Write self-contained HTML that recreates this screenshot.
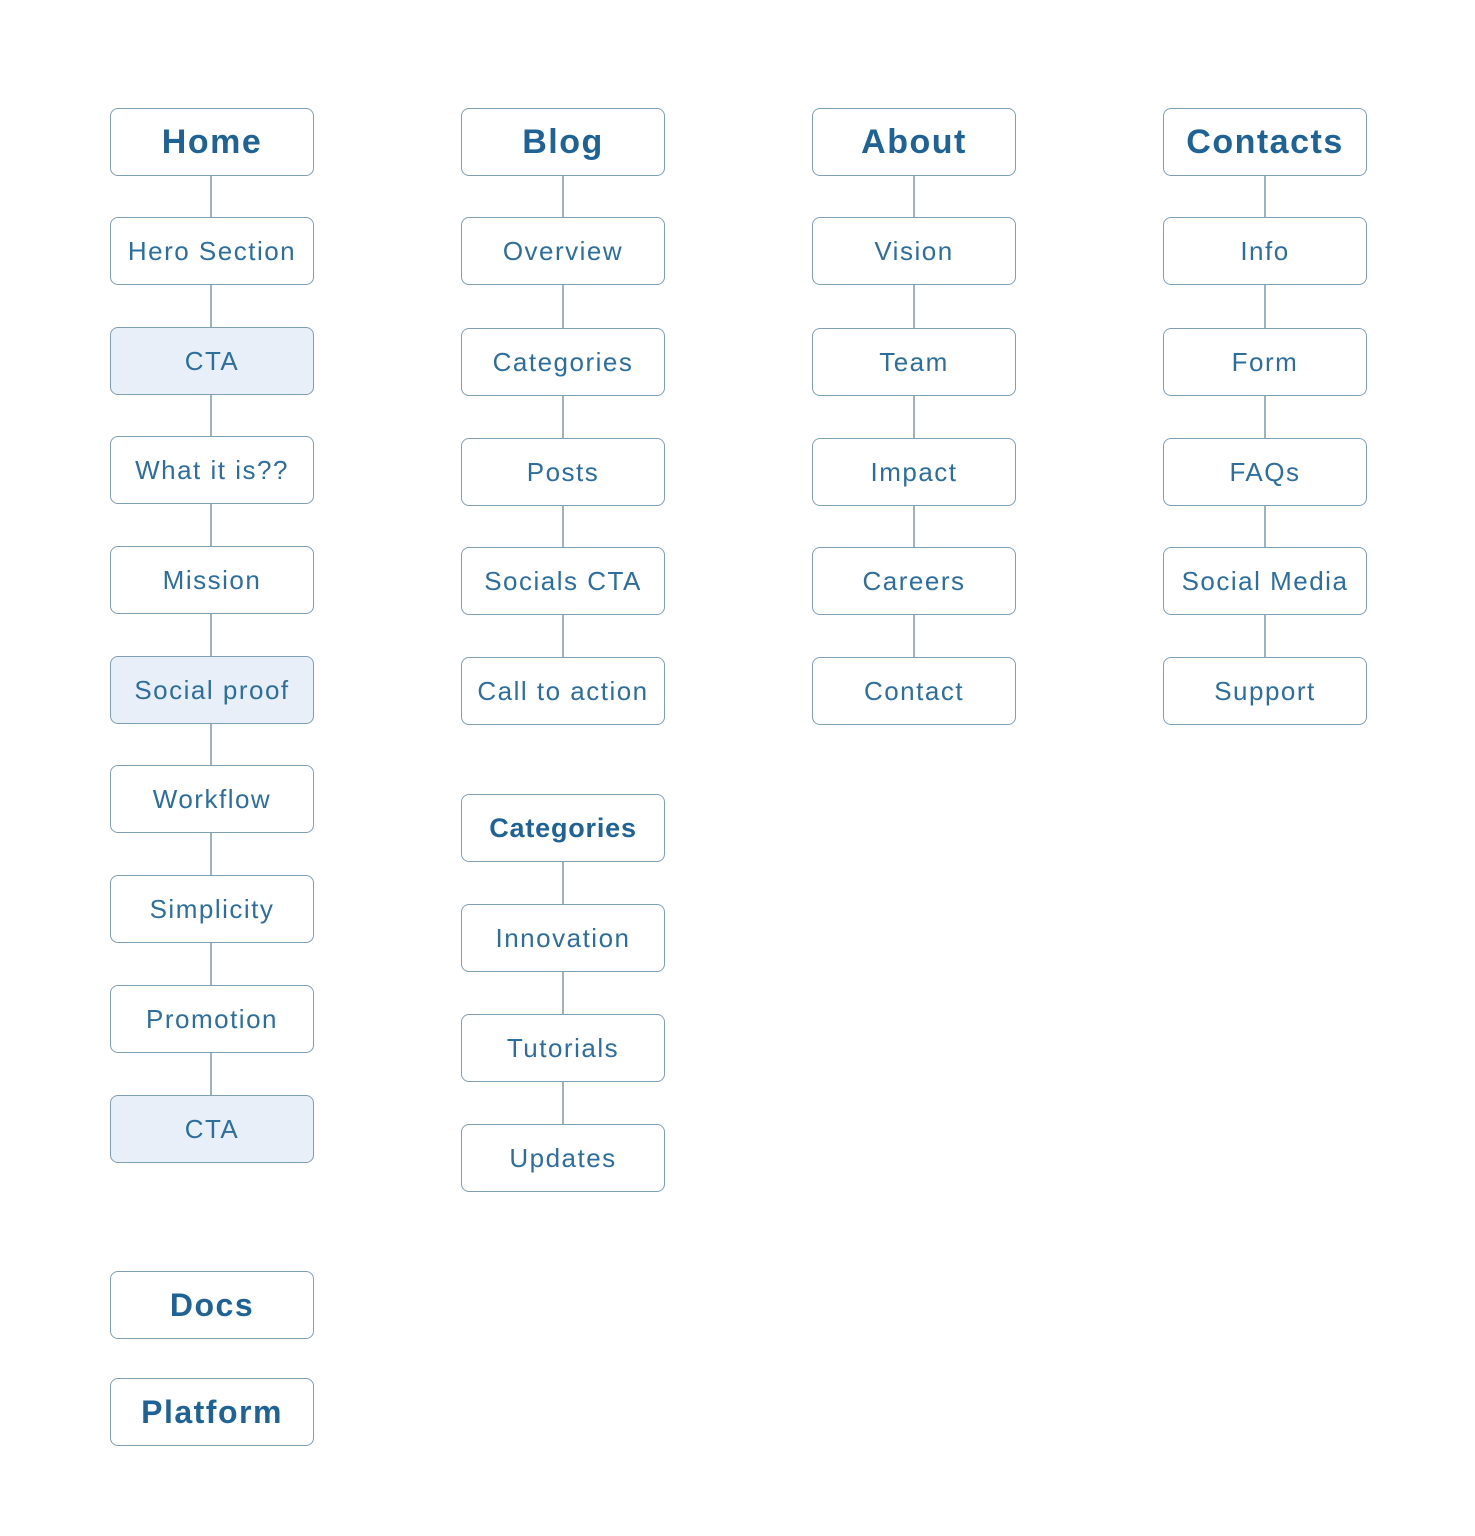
<!DOCTYPE html>
<html><head><meta charset="utf-8">
<style>
html,body{margin:0;padding:0;background:#fff;}
body{width:1475px;height:1536px;position:relative;overflow:hidden;font-family:"Liberation Sans",sans-serif;}
.b{position:absolute;width:202px;height:66px;border:1px solid #7f9fb4;border-radius:8px;background:#fff;display:flex;align-items:center;justify-content:center;color:#2d6e9e;font-size:26px;letter-spacing:1.5px;white-space:nowrap;box-sizing:content-box;z-index:2;}
.h{font-weight:bold;font-size:34px;color:#1f6396;letter-spacing:1.5px;}
.h2{font-weight:bold;font-size:27px;color:#1f6396;letter-spacing:0.8px;}
.f{background:#e8eff8;}
.l{position:absolute;width:2px;background:#9ab4c4;z-index:1;}
</style></head><body>
<!-- Column 1 -->
<div class="l" style="left:210px;top:170px;height:930px"></div>
<div class="b h" style="left:110px;top:108px">Home</div>
<div class="b" style="left:110px;top:217px">Hero Section</div>
<div class="b f" style="left:110px;top:327px">CTA</div>
<div class="b" style="left:110px;top:436px">What it is??</div>
<div class="b" style="left:110px;top:546px">Mission</div>
<div class="b f" style="left:110px;top:656px">Social proof</div>
<div class="b" style="left:110px;top:765px">Workflow</div>
<div class="b" style="left:110px;top:875px">Simplicity</div>
<div class="b" style="left:110px;top:985px">Promotion</div>
<div class="b f" style="left:110px;top:1095px">CTA</div>
<div class="b h" style="left:110px;top:1271px;font-size:32px">Docs</div>
<div class="b h" style="left:110px;top:1378px;font-size:32px">Platform</div>
<!-- Column 2 -->
<div class="l" style="left:562px;top:170px;height:495px"></div>
<div class="b h" style="left:461px;top:108px">Blog</div>
<div class="b" style="left:461px;top:217px">Overview</div>
<div class="b" style="left:461px;top:328px">Categories</div>
<div class="b" style="left:461px;top:438px">Posts</div>
<div class="b" style="left:461px;top:547px">Socials CTA</div>
<div class="b" style="left:461px;top:657px">Call to action</div>
<div class="l" style="left:562px;top:855px;height:280px"></div>
<div class="b h2" style="left:461px;top:794px">Categories</div>
<div class="b" style="left:461px;top:904px">Innovation</div>
<div class="b" style="left:461px;top:1014px">Tutorials</div>
<div class="b" style="left:461px;top:1124px">Updates</div>
<!-- Column 3 -->
<div class="l" style="left:913px;top:170px;height:495px"></div>
<div class="b h" style="left:812px;top:108px">About</div>
<div class="b" style="left:812px;top:217px">Vision</div>
<div class="b" style="left:812px;top:328px">Team</div>
<div class="b" style="left:812px;top:438px">Impact</div>
<div class="b" style="left:812px;top:547px">Careers</div>
<div class="b" style="left:812px;top:657px">Contact</div>
<!-- Column 4 -->
<div class="l" style="left:1264px;top:170px;height:495px"></div>
<div class="b h" style="left:1163px;top:108px">Contacts</div>
<div class="b" style="left:1163px;top:217px">Info</div>
<div class="b" style="left:1163px;top:328px">Form</div>
<div class="b" style="left:1163px;top:438px">FAQs</div>
<div class="b" style="left:1163px;top:547px">Social Media</div>
<div class="b" style="left:1163px;top:657px">Support</div>
</body></html>
